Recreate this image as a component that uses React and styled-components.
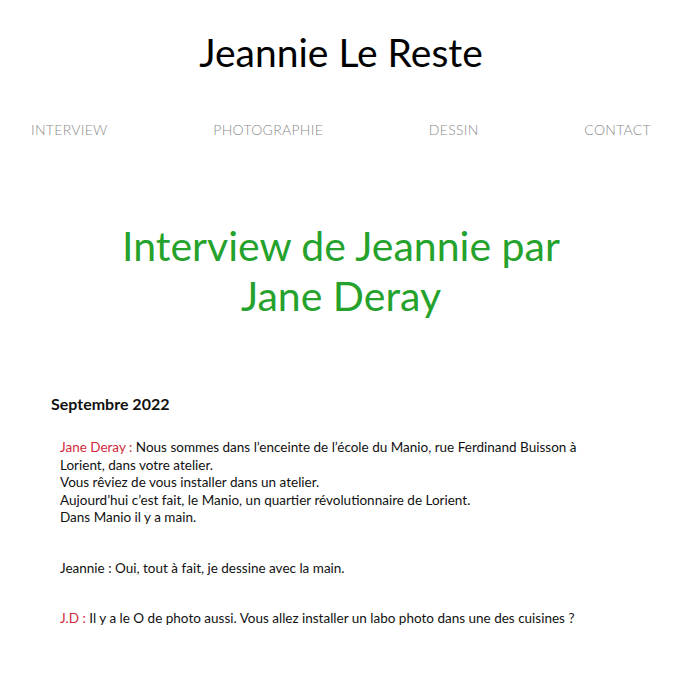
import styled, { createGlobalStyle } from "styled-components";

const GlobalStyle = createGlobalStyle`
  body {
    margin: 0;
    background: #ffffff;
    font-family: "Lato", "Liberation Sans", sans-serif;
    color: #111111;
  }
`;

const links = ["INTERVIEW", "PHOTOGRAPHIE", "DESSIN", "CONTACT"];

const exchanges = [
  {
    speaker: "Jane Deray :",
    lines: [
      "Nous sommes dans l’enceinte de l’école du Manio, rue Ferdinand Buisson à",
      "Lorient, dans votre atelier.",
      "Vous rêviez de vous installer dans un atelier.",
      "Aujourd’hui c’est fait, le Manio, un quartier révolutionnaire de Lorient.",
      "Dans Manio il y a main.",
    ],
  },
  { label: "Jeannie :", lines: ["Oui, tout à fait, je dessine avec la main."] },
  {
    speaker: "J.D :",
    lines: ["Il y a le O de photo aussi. Vous allez installer un labo photo dans une des cuisines ?"],
  },
];

function App() {
  return (
    <Page>
      <GlobalStyle />
      <SiteTitle>Jeannie Le Reste</SiteTitle>
      <Nav>
        {links.map((l) => (
          <NavLink key={l} href="#">{l}</NavLink>
        ))}
      </Nav>
      <Heading>
        Interview de Jeannie par
        <br />
        Jane Deray
      </Heading>
      <Article>
        <DateLine>Septembre 2022</DateLine>
        {exchanges.map((ex, i) => (
          <Paragraph key={i}>
            {ex.speaker && <Speaker>{ex.speaker}</Speaker>}
            {ex.label && <>{ex.label}</>}{" "}
            {ex.lines.map((line, j) => (
              <span key={j}>
                {j > 0 && <br />}
                {line}
              </span>
            ))}
          </Paragraph>
        ))}
      </Article>
    </Page>
  );
}

const Page = styled.div`
  width: 682px;
  display: flex;
  flex-direction: column;
`;

const SiteTitle = styled.h1`
  margin: 29px 0 0 0;
  font-size: 39px;
  line-height: 46px;
  font-weight: 400;
  text-align: center;
  color: #000000;
`;

const Nav = styled.nav`
  display: flex;
  justify-content: space-between;
  padding: 0 31px;
  margin-top: 41px;
  height: 26px;
  align-items: center;
`;

const NavLink = styled.a`
  font-size: 14px;
  font-weight: 300;
  color: #8a8a8a;
  text-decoration: none;
  letter-spacing: 0.3px;
`;

const Heading = styled.h2`
  margin: 79px 0 0 0;
  font-size: 41px;
  line-height: 50px;
  font-weight: 400;
  text-align: center;
  color: #24a22c;
`;

const Article = styled.article`
  padding-left: 51px;
  margin-top: 73px;
`;

const DateLine = styled.h3`
  margin: 0 0 25px 0;
  font-size: 16px;
  line-height: 20px;
  font-weight: 700;
  color: #111111;
`;

const Paragraph = styled.p`
  margin: 0 0 33px 9px;
  font-size: 13.5px;
  line-height: 17.5px;
  white-space: nowrap;
`;

const Speaker = styled.span`
  color: #d02a3a;
`;

export default App;
